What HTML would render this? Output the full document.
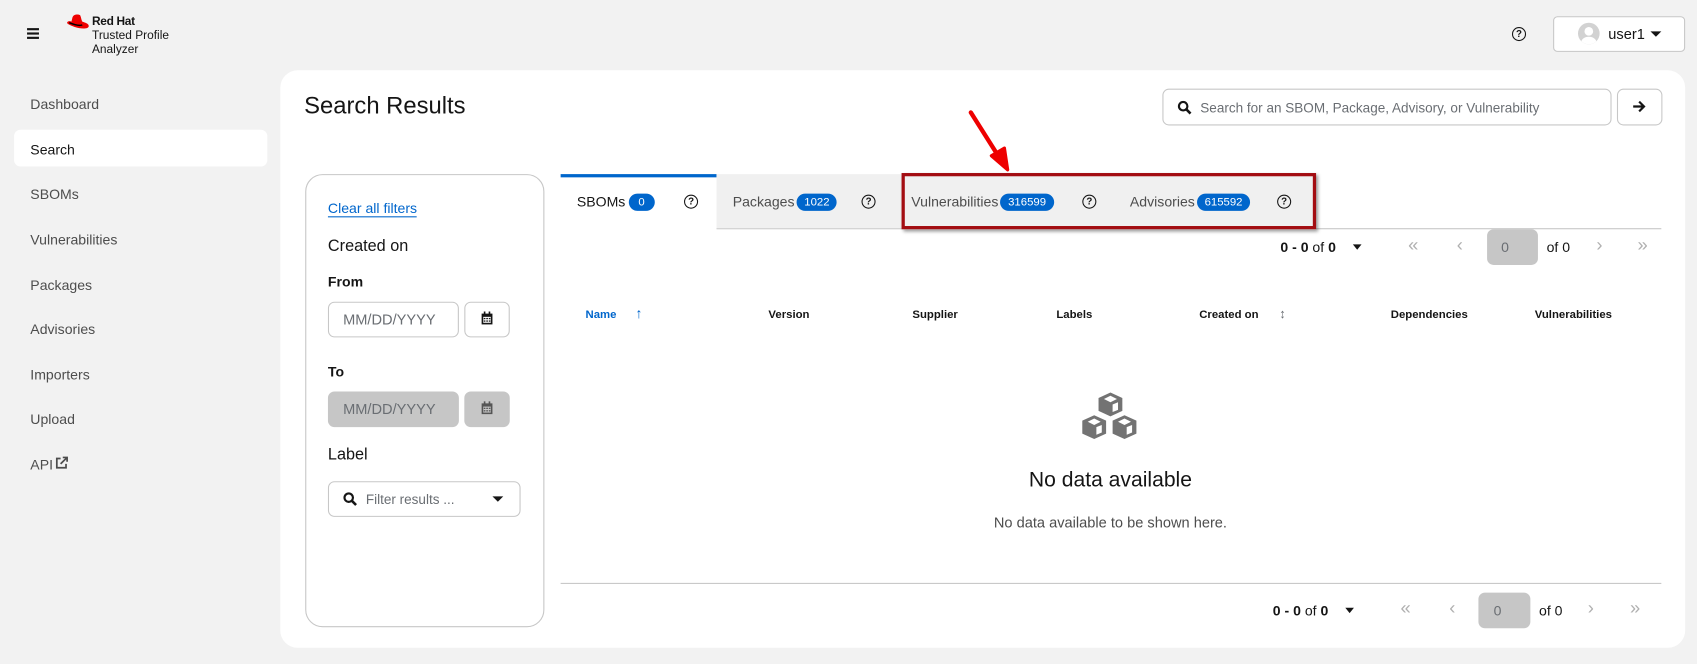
<!DOCTYPE html>
<html><head><meta charset="utf-8"><style>
*{box-sizing:border-box;margin:0;padding:0}
html,body{width:1697px;height:664px;overflow:hidden;background:#f2f2f2;font-family:"Liberation Sans",sans-serif;color:#151515}
#w{position:absolute;left:0;top:0;width:1568px;height:614px;transform:scale(1.0823,1.0814);transform-origin:0 0}
.a{position:absolute;white-space:nowrap}
.nav{left:28px;font-size:13px;color:#4d4d4d}
.card{left:259px;top:65px;width:1298px;height:534px;background:#fff;border-radius:16px}
.inp{position:absolute;border:1px solid #c7c7c7;border-radius:6px;background:#fff}
.badge{display:inline-block;background:#0066cc;color:#fff;font-size:10.5px;border-radius:10px;padding:2px 7px;vertical-align:1px;margin-left:3px}
.q{position:absolute;width:13px;height:13px;border:1.8px solid #151515;border-radius:50%;font-size:9px;font-weight:bold;text-align:center;line-height:10px}
.th{font-size:10.5px;font-weight:bold;top:285px}
.pg{font-size:17px;color:#b0b0b0}
</style></head><body><div id="w">
<div class="a" style="left:25px;top:26px;width:11px;height:2px;background:#151515;box-shadow:0 4px 0 #151515,0 8px 0 #151515"></div>
<svg class="a" style="left:61px;top:13px" width="22" height="16" viewBox="0 0 22 16"><path d="M6 3 C7 0 11 0 13 1 C14 3 14 5 15 7 C18 8 21 9 21 11 C21 14 14 14 8 12 C3 10 1 9 1 8 C1 7 3 6 5 7 Z" fill="#e00"/><path d="M3 8 C8 10 13 11 15 10" stroke="#000" stroke-width="1.4" fill="none"/></svg>
<div class="a" style="left:85px;top:14px;font-size:11px;font-weight:bold;letter-spacing:-0.3px">Red Hat</div>
<div class="a" style="left:85px;top:27px;font-size:11px;line-height:12.5px">Trusted Profile<br>Analyzer</div>
<div class="q" style="left:1397px;top:25px">?</div>
<div class="inp" style="left:1435px;top:15px;width:122px;height:33px;border-radius:4px"></div>
<div class="a" style="left:1458px;top:21px;width:20px;height:20px;border-radius:50%;background:#d2d2d2;overflow:hidden"><div style="position:absolute;left:6px;top:4px;width:8px;height:8px;border-radius:50%;background:#fff"></div><div style="position:absolute;left:3px;top:13px;width:14px;height:10px;border-radius:50%;background:#fff"></div></div>
<div class="a" style="left:1486px;top:24px;font-size:13.5px">user1</div>
<div class="a" style="left:1525px;top:29px;border:5px solid transparent;border-top:5px solid #151515"></div>
<div class="a" style="left:13px;top:120px;width:234px;height:34px;background:#fff;border-radius:6px"></div>
<div class="a nav" style="top:89px">Dashboard</div>
<div class="a nav" style="top:131px;color:#151515">Search</div>
<div class="a nav" style="top:172px">SBOMs</div>
<div class="a nav" style="top:214px">Vulnerabilities</div>
<div class="a nav" style="top:256px">Packages</div>
<div class="a nav" style="top:297px">Advisories</div>
<div class="a nav" style="top:339px">Importers</div>
<div class="a nav" style="top:380px">Upload</div>
<div class="a nav" style="top:422px">API<svg width="12" height="12" viewBox="0 0 12 12" style="vertical-align:0;margin-left:2px"><path d="M5 2H1.5V10.5H10V7M7 1H11V5M11 1L5 7" stroke="#4d4d4d" stroke-width="1.6" fill="none"/></svg></div>
<div class="a card"></div>
<div class="a" style="left:281px;top:85px;font-size:22px">Search Results</div>
<div class="inp" style="left:1074px;top:82px;width:415px;height:34px"></div>
<svg class="a" style="left:1088px;top:93px" width="13" height="13" viewBox="0 0 13 13"><circle cx="5.2" cy="5.2" r="3.9" stroke="#151515" stroke-width="2" fill="none"/><path d="M8 8L12 12" stroke="#151515" stroke-width="2.4"/></svg>
<div class="a" style="left:1109px;top:93px;font-size:12.5px;color:#6a6e73">Search for an SBOM, Package, Advisory, or Vulnerability</div>
<div class="inp" style="left:1494px;top:82px;width:42px;height:34px"></div>
<svg class="a" style="left:1508px;top:92px" width="13" height="13" viewBox="0 0 13 13"><path d="M1 6.5H11M6.5 2L11 6.5L6.5 11" stroke="#151515" stroke-width="2" fill="none"/></svg>
<div class="a" style="left:282px;top:161px;width:221px;height:419px;border:1px solid #c7c7c7;border-radius:16px"></div>
<div class="a" style="left:303px;top:185px;font-size:13px;color:#0066cc;border-bottom:1px solid #0066cc;line-height:15px">Clear all filters</div>
<div class="a" style="left:303px;top:219px;font-size:15px">Created on</div>
<div class="a" style="left:303px;top:253px;font-size:13px;font-weight:bold">From</div>
<div class="inp" style="left:303px;top:279px;width:121px;height:33px"></div>
<div class="a" style="left:317px;top:288px;font-size:13.5px;color:#6a6e73">MM/DD/YYYY</div>
<div class="inp" style="left:429px;top:279px;width:42px;height:33px"></div>
<svg class="a" style="left:444px;top:288px" width="12" height="13" viewBox="0 0 12 13"><path d="M1 2H11V12H1Z" fill="#151515"/><rect x="2.5" y="5" width="7" height="5.5" fill="#fff"/><g fill="#151515"><rect x="3" y="6" width="1.5" height="1.2"/><rect x="5.3" y="6" width="1.5" height="1.2"/><rect x="7.6" y="6" width="1.5" height="1.2"/><rect x="3" y="8.3" width="1.5" height="1.2"/><rect x="5.3" y="8.3" width="1.5" height="1.2"/><rect x="7.6" y="8.3" width="1.5" height="1.2"/><rect x="3" y="0" width="1.5" height="3"/><rect x="7.5" y="0" width="1.5" height="3"/></g></svg>
<div class="a" style="left:303px;top:336px;font-size:13px;font-weight:bold">To</div>
<div class="a" style="left:303px;top:362px;width:121px;height:33px;background:#c6c6c6;border-radius:6px"></div>
<div class="a" style="left:317px;top:371px;font-size:13.5px;color:#6a6e73">MM/DD/YYYY</div>
<div class="a" style="left:429px;top:362px;width:42px;height:33px;background:#c6c6c6;border-radius:6px"></div>
<svg class="a" style="left:444px;top:371px" width="12" height="13" viewBox="0 0 12 13"><path d="M1 2H11V12H1Z" fill="#555"/><rect x="2.5" y="5" width="7" height="5.5" fill="#c6c6c6"/><g fill="#555"><rect x="3" y="6" width="1.5" height="1.2"/><rect x="5.3" y="6" width="1.5" height="1.2"/><rect x="7.6" y="6" width="1.5" height="1.2"/><rect x="3" y="8.3" width="1.5" height="1.2"/><rect x="5.3" y="8.3" width="1.5" height="1.2"/><rect x="7.6" y="8.3" width="1.5" height="1.2"/><rect x="3" y="0" width="1.5" height="3"/><rect x="7.5" y="0" width="1.5" height="3"/></g></svg>
<div class="a" style="left:303px;top:412px;font-size:15px">Label</div>
<div class="inp" style="left:303px;top:445px;width:178px;height:33px"></div>
<svg class="a" style="left:317px;top:455px" width="13" height="13" viewBox="0 0 13 13"><circle cx="5.2" cy="5.2" r="3.9" stroke="#151515" stroke-width="2" fill="none"/><path d="M8 8L12 12" stroke="#151515" stroke-width="2.4"/></svg>
<div class="a" style="left:338px;top:455px;font-size:12.5px;color:#6a6e73">Filter results ...</div>
<div class="a" style="left:455px;top:459px;border:5px solid transparent;border-top:5px solid #151515"></div>
<div class="a" style="left:662px;top:211px;width:873px;height:1px;background:#c7c7c7"></div>
<div class="a" style="left:518px;top:161px;width:144px;height:3px;background:#0066cc"></div>
<div class="a" style="left:662px;top:161px;width:553px;height:50px;background:#f0f0f0"></div>
<div class="a" style="left:533px;top:179px;font-size:13px">SBOMs<span class="badge" style="padding:2px 9px">0</span></div>
<div class="q" style="left:632px;top:180px">?</div>
<div class="a" style="left:677px;top:179px;font-size:13px;color:#4d4d4d">Packages<span class="badge" style="margin-left:2px">1022</span></div>
<div class="q" style="left:796px;top:180px">?</div>
<div class="a" style="left:842px;top:179px;font-size:13px;color:#4d4d4d">Vulnerabilities<span class="badge" style="margin-left:2px">316599</span></div>
<div class="q" style="left:1000px;top:180px">?</div>
<div class="a" style="left:1044px;top:179px;font-size:13px;color:#4d4d4d">Advisories<span class="badge" style="margin-left:2px">615592</span></div>
<div class="q" style="left:1180px;top:180px">?</div>
<div class="a" style="left:833px;top:160px;width:383px;height:52px;border:3px solid #a30d12;box-shadow:2px 2px 3px rgba(0,0,0,.4)"></div>
<svg class="a" style="left:890px;top:100px" width="50" height="62" viewBox="0 0 50 62"><path d="M7 4L36 50" stroke="#e00" stroke-width="4" stroke-linecap="round"/><path d="M26 44L41 57L38 37Z" fill="#e00" stroke="#e00" stroke-width="3" stroke-linejoin="round"/></svg>
<div class="a" style="left:1183px;top:221px;font-size:13px"><b>0 - 0</b> of <b>0</b></div>
<div class="a" style="left:1250px;top:226px;border:4px solid transparent;border-top:5px solid #151515"></div>
<div class="a pg" style="left:1301px;top:217px">«</div>
<div class="a pg" style="left:1346px;top:217px">‹</div>
<div class="a" style="left:1374px;top:212px;width:47px;height:33px;background:#c6c6c6;border-radius:6px"></div>
<div class="a" style="left:1387px;top:221px;font-size:13px;color:#6a6e73">0</div>
<div class="a" style="left:1429px;top:221px;font-size:13px">of 0</div>
<div class="a pg" style="left:1475px;top:217px">›</div>
<div class="a pg" style="left:1513px;top:217px">»</div>
<div class="a th" style="left:541px;color:#0066cc">Name</div>
<div class="a" style="left:587px;top:282px;font-size:13px;color:#0066cc;font-weight:bold">↑</div>
<div class="a th" style="left:710px">Version</div>
<div class="a th" style="left:843px">Supplier</div>
<div class="a th" style="left:976px">Labels</div>
<div class="a th" style="left:1108px">Created on</div>
<div class="a" style="left:1182px;top:283px;font-size:12px;color:#6a6e73">↕</div>
<div class="a th" style="left:1285px">Dependencies</div>
<div class="a th" style="left:1418px">Vulnerabilities</div>
<svg class="a" style="left:999px;top:362px" width="54" height="46" viewBox="0 0 54 46"><g fill="#737373"><path d="M27 1L38 6V18L27 23L16 18V6Z"/><path d="M16 20L27 25V37L16 42L5 37V25Z" transform="translate(-4 2)"/><path d="M38 20L49 25V37L38 42L27 37V25Z" transform="translate(2 2)"/></g><g fill="#fff"><path d="M27 4L33 7L27 10L21 7Z"/><path d="M29 12L34 10V17L29 19Z"/><path d="M12 25L18 28L12 31L6 28Z"/><path d="M14 33L19 31V38L14 40Z"/><path d="M40 25L46 28L40 31L34 28Z"/><path d="M42 33L47 31V38L42 40Z"/></g></svg>
<div class="a" style="left:926px;top:433px;width:200px;text-align:center;font-size:19.5px">No data available</div>
<div class="a" style="left:876px;top:476px;width:300px;text-align:center;font-size:13.5px;color:#4d4d4d">No data available to be shown here.</div>
<div class="a" style="left:518px;top:539px;width:1017px;height:1px;background:#c7c7c7"></div>
<div class="a" style="left:1176px;top:557px;font-size:13px"><b>0 - 0</b> of <b>0</b></div>
<div class="a" style="left:1243px;top:562px;border:4px solid transparent;border-top:5px solid #151515"></div>
<div class="a pg" style="left:1294px;top:553px">«</div>
<div class="a pg" style="left:1339px;top:553px">‹</div>
<div class="a" style="left:1366px;top:548px;width:48px;height:33px;background:#c6c6c6;border-radius:6px"></div>
<div class="a" style="left:1380px;top:557px;font-size:13px;color:#6a6e73">0</div>
<div class="a" style="left:1422px;top:557px;font-size:13px">of 0</div>
<div class="a pg" style="left:1467px;top:553px">›</div>
<div class="a pg" style="left:1506px;top:553px">»</div>
</div></body></html>
